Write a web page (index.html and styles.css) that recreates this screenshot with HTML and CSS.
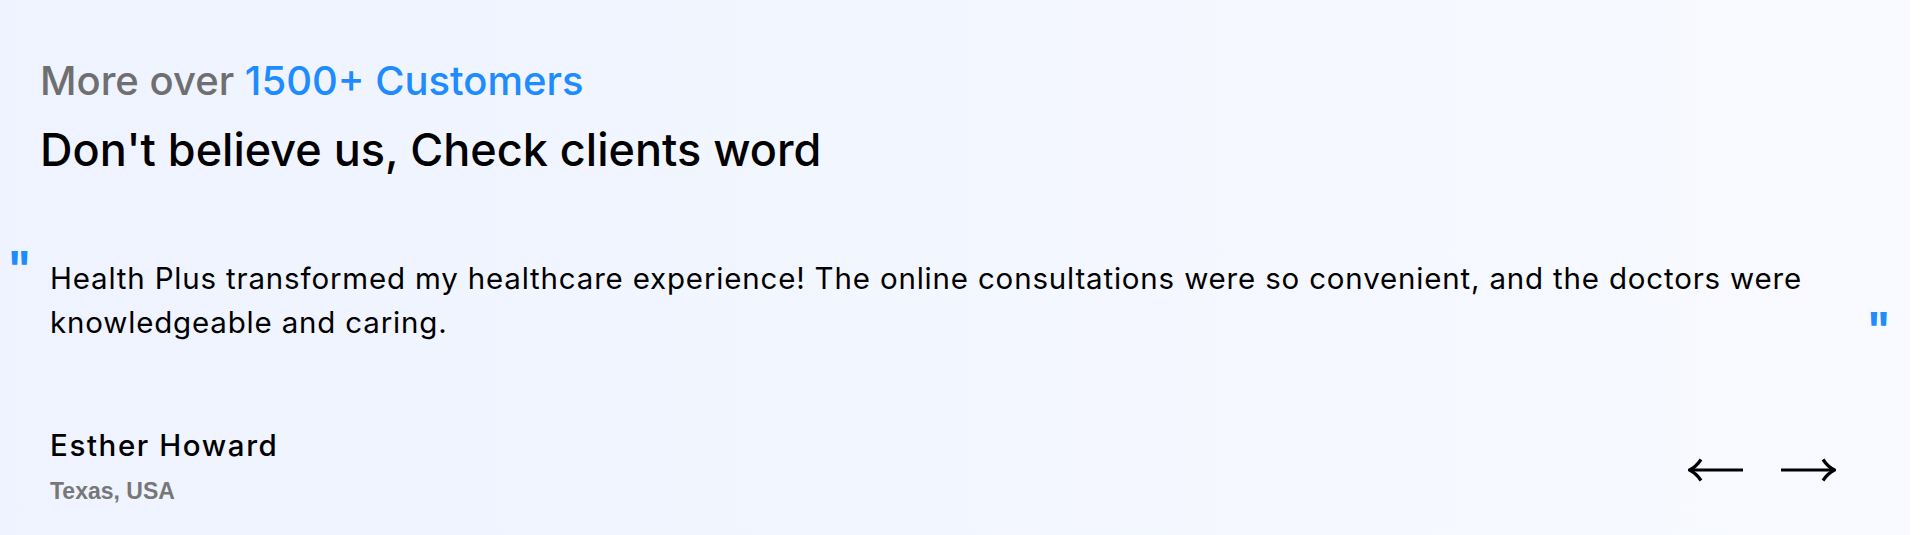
FILE: index.html
```html
<!DOCTYPE html>
<html lang="en">
<head>
<meta charset="utf-8">
<title>Testimonials</title>
<link rel="stylesheet" href="styles.css">
</head>
<body>
<section class="testimonials">
  <header class="intro">
    <p class="kicker">More over <span class="accent">1500+ Customers</span></p>
    <h2 class="title">Don't believe us, Check clients word</h2>
  </header>
  <div class="quote-row">
    <span class="q q-open">"</span>
    <p class="quote-text">Health Plus transformed my healthcare experience! The online consultations were so convenient, and the doctors were knowledgeable and caring.</p>
    <span class="q q-close">"</span>
  </div>
  <div class="footer">
    <div class="author">
      <div class="name">Esther Howard</div>
      <div class="place">Texas, USA</div>
    </div>
    <div class="nav">
      <button class="arrow" aria-label="Previous">
        <svg width="56" height="24" viewBox="0 0 56 24"><path d="M2 12 H55" stroke="#000" stroke-width="3" fill="none"/><path d="M13 1.5 Q8 9 1.5 12 Q8 15 13 22.5" stroke="#000" stroke-width="3.2" fill="none" stroke-linejoin="miter"/></svg>
      </button>
      <button class="arrow" aria-label="Next">
        <svg width="56" height="24" viewBox="0 0 56 24"><path d="M1 12 H54" stroke="#000" stroke-width="3" fill="none"/><path d="M43 1.5 Q48 9 54.5 12 Q48 15 43 22.5" stroke="#000" stroke-width="3.2" fill="none"/></svg>
      </button>
    </div>
  </div>
</section>
</body>
</html>
```

FILE: styles.css
```css
html, body {
  margin: 0;
  padding: 0;
  background: #ffffff;
}
.testimonials {
  width: 1910px;
  height: 535px;
  box-sizing: border-box;
  padding: 58px 14px 0 7px;
  background: linear-gradient(90deg, #eef3ff 0%, #f8faff 100%);
  font-family: Inter, "Liberation Sans", sans-serif;
}
.intro {
  margin-left: 33px;
}
.kicker {
  margin: 0;
  font-size: 40px;
  line-height: 46px;
  font-weight: 500;
  color: #6f6f70;
}
.accent {
  color: #1e8bff;
}
.title {
  margin: 19px 0 0;
  font-size: 45px;
  line-height: 54px;
  font-weight: 500;
  color: #000;
}
.quote-row {
  display: flex;
  align-items: flex-start;
  margin-top: 63px;
}
.q {
  font-family: Inter, sans-serif;
  font-weight: 700;
  font-size: 45px;
  line-height: 50px;
  height: 50px;
  color: #1e8bff;
}
.q-open {
  width: 43px;
  margin-top: 3px;
}
.q-close {
  margin-top: 64px;
  margin-right: 5px;
}
.quote-text {
  flex: 1;
  margin: 16px 0 0;
  padding-right: 10px;
  font-size: 29.5px;
  letter-spacing: 0.82px;
  line-height: 44px;
  color: #000;
}
.footer {
  display: flex;
  justify-content: space-between;
  align-items: center;
  margin: 74px 60px 0 43px;
}
.name {
  font-size: 29.5px;
  line-height: 34px;
  font-weight: 500;
  color: #000;
  letter-spacing: 1.6px;
}
.place {
  margin-top: 17px;
  font-family: "Liberation Sans", Arial, sans-serif;
  font-weight: 700;
  font-size: 23px;
  line-height: 24px;
  color: #777;
}
.nav {
  display: flex;
  gap: 36px;
  margin-top: 8px;
}
.arrow {
  padding: 0;
  border: 0;
  background: none;
  display: block;
  line-height: 0;
  cursor: pointer;
}
```
